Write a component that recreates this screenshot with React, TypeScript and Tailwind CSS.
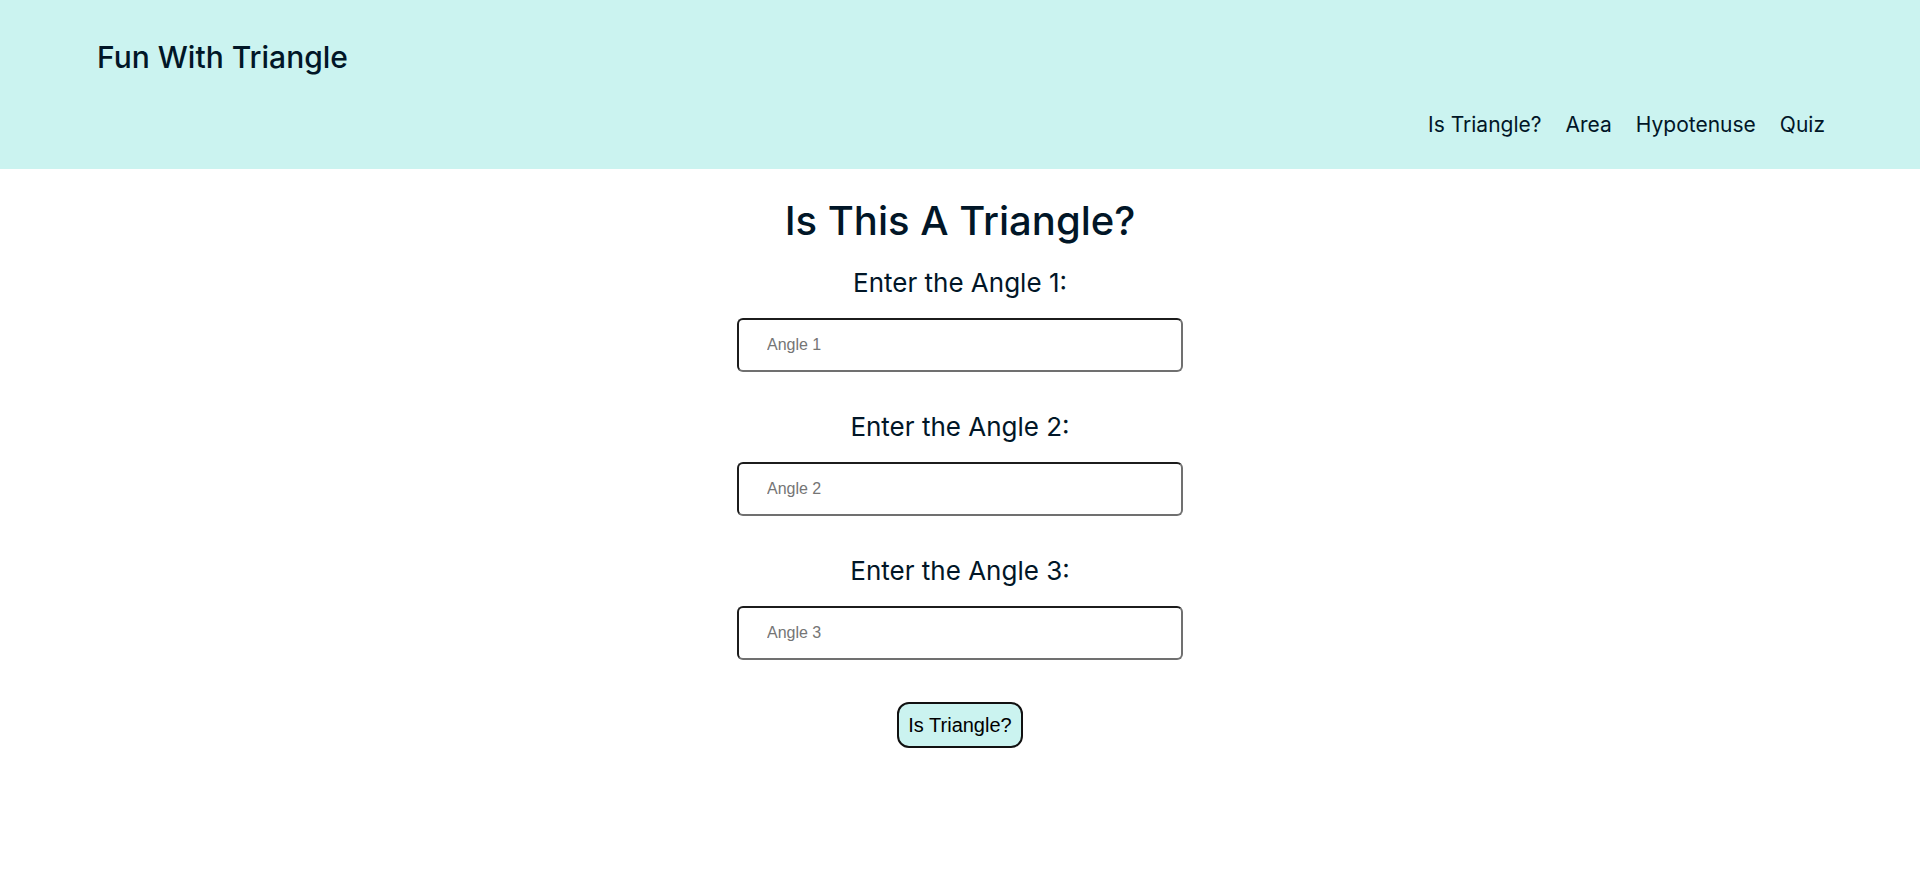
import { useState } from "react"

const navLinks = ["Is Triangle?", "Area", "Hypotenuse", "Quiz"]

function AngleField({ index, value, onChange }: { index: number; value: string; onChange: (v: string) => void }) {
  return (
    <div className="flex flex-col items-center gap-[22px]">
      <label htmlFor={`angle-${index}`} className="text-[26px] leading-none font-normal">
        Enter the Angle {index}:
      </label>
      <input
        id={`angle-${index}`}
        type="number"
        value={value}
        onChange={(e) => onChange(e.target.value)}
        placeholder={`Angle ${index}`}
        className="h-[54px] w-[446px] rounded-md border-2 border-t-[#1c1c1c] border-l-[#1c1c1c] border-b-[#707070] border-r-[#707070] bg-white pl-[28px] font-['Liberation_Sans',Arial,sans-serif] text-[16px] text-black outline-none placeholder:text-[#757575]"
      />
    </div>
  )
}

export default function App() {
  const [angles, setAngles] = useState(["", "", ""])

  function setAngle(i: number, v: string) {
    setAngles((prev) => prev.map((a, idx) => (idx === i ? v : a)))
  }

  return (
    <div className="min-h-screen bg-white font-['Inter',sans-serif] text-[#011627]">
      <header className="flex h-[169px] flex-col bg-[#cbf3f0] pl-[97px] pr-[95px]">
        <h2 className="mt-[42px] text-[30px] leading-none font-medium">Fun With Triangle</h2>
        <nav className="mt-auto mb-[34px] flex justify-end gap-[24px]">
          {navLinks.map((link) => (
            <a key={link} href="#" className="text-[21px] leading-none">
              {link}
            </a>
          ))}
        </nav>
      </header>

      <main className="flex flex-col items-center">
        <h1 className="mt-[32px] text-[40px] leading-none font-medium">Is This A Triangle?</h1>
        <div className="mt-[29px] flex flex-col gap-[42px]">
          {angles.map((a, i) => (
            <AngleField key={i} index={i + 1} value={a} onChange={(v) => setAngle(i, v)} />
          ))}
        </div>
        <button
          type="button"
          className="mt-[42px] h-[46px] w-[126px] rounded-xl border-2 border-[#111] bg-[#cbf3f0] font-['Liberation_Sans',Arial,sans-serif] text-[20px] text-black"
        >
          Is Triangle?
        </button>
      </main>
    </div>
  )
}
